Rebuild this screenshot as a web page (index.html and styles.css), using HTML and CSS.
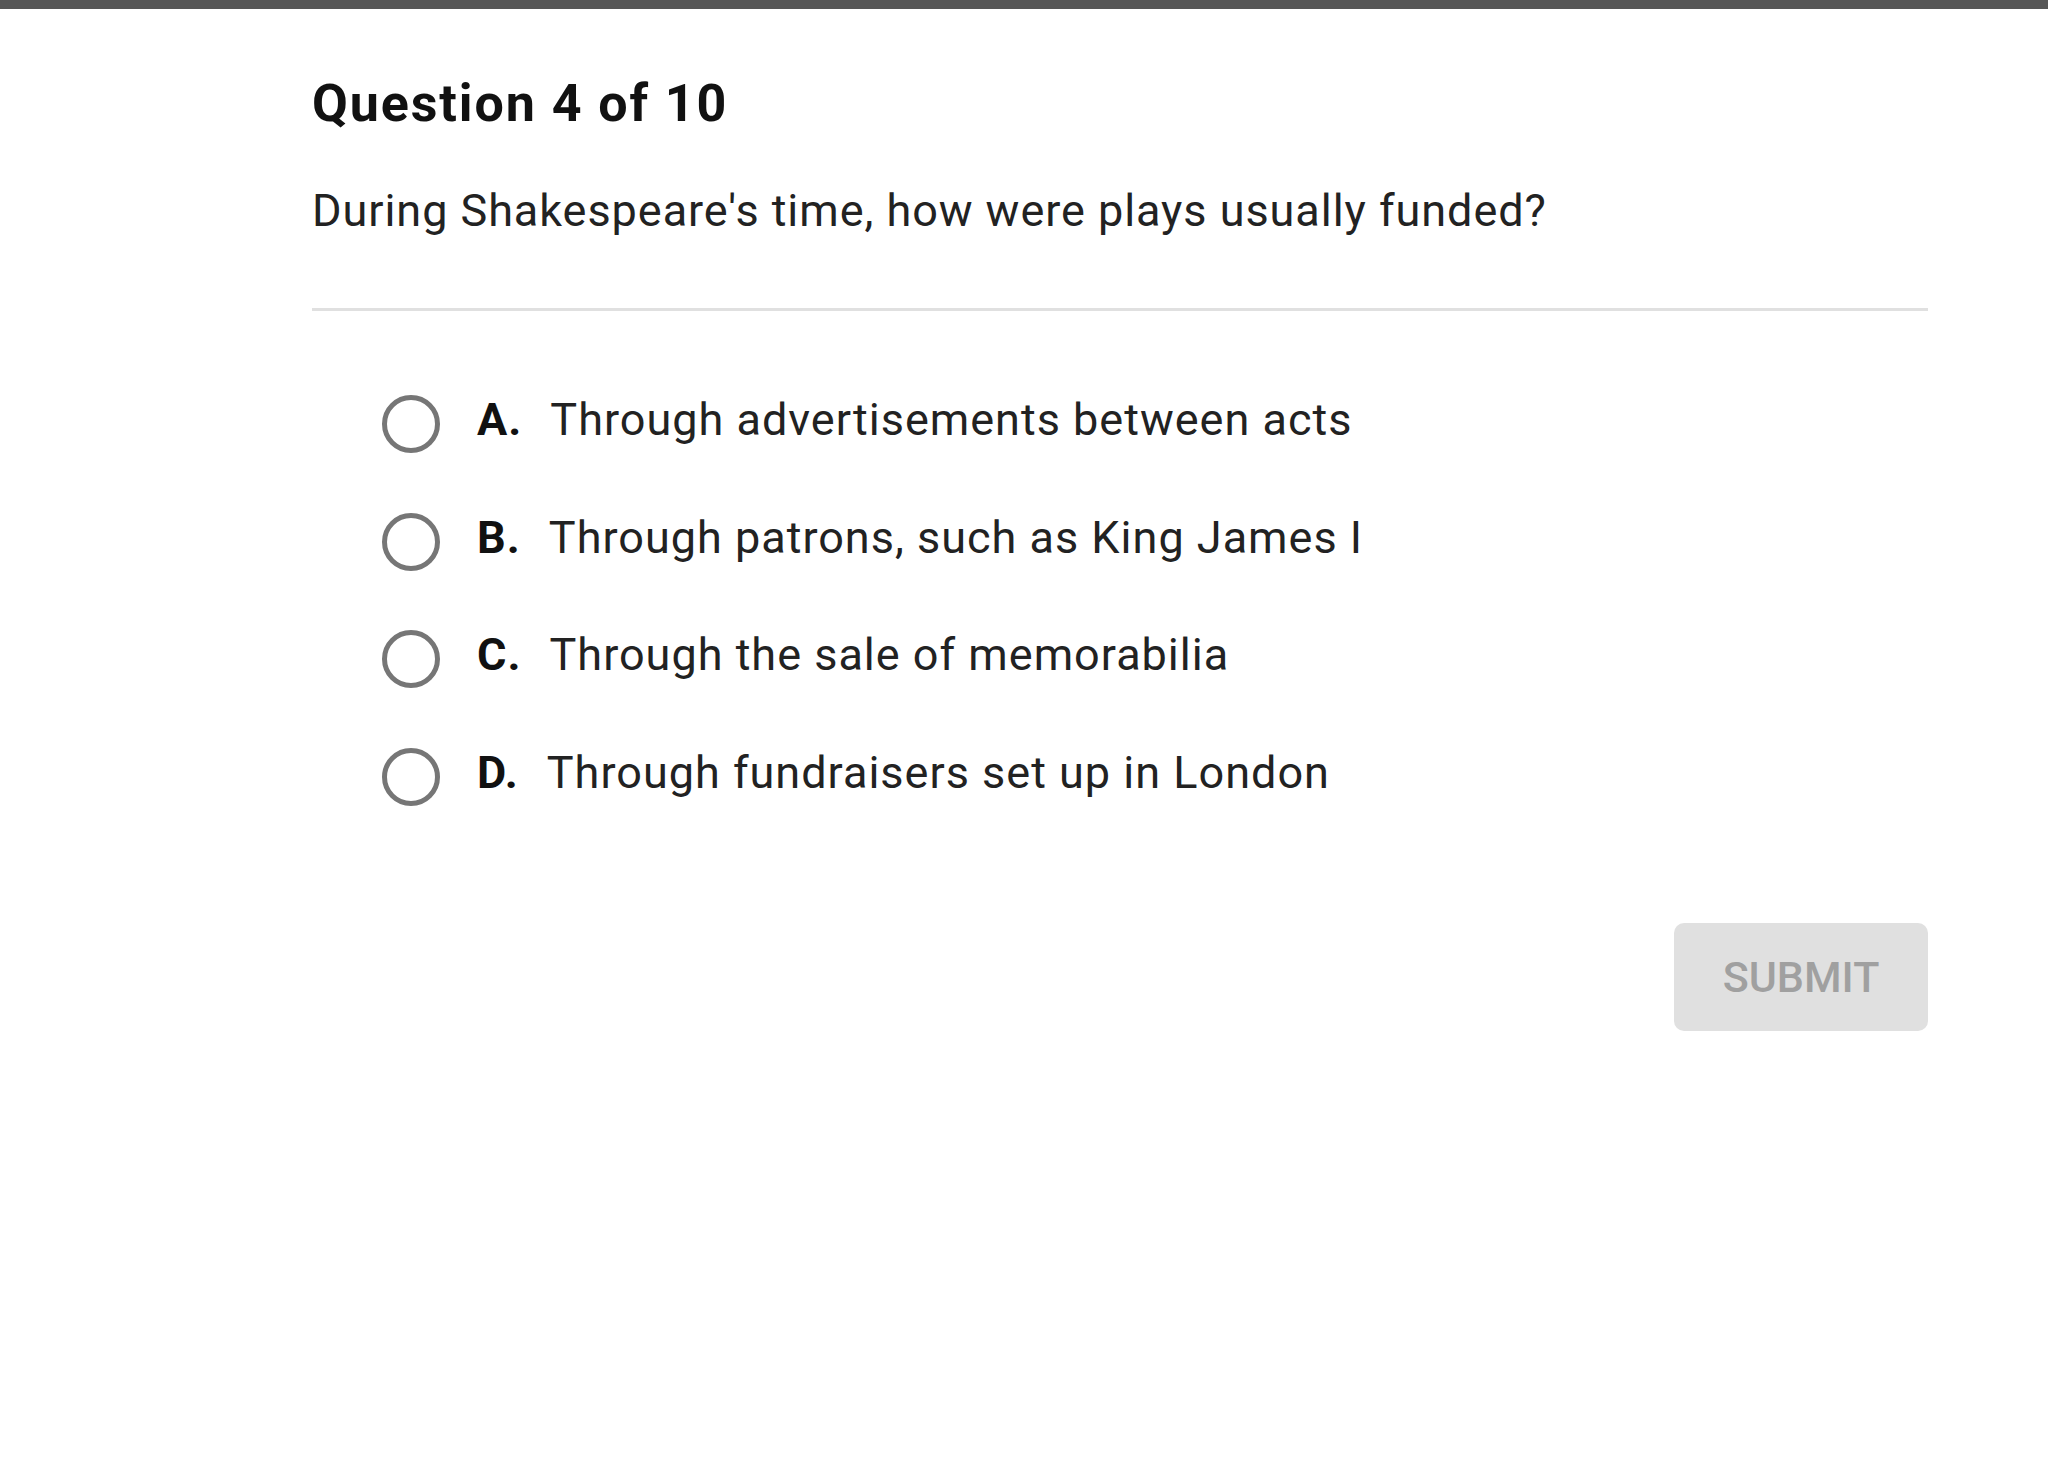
FILE: index.html
```html
<!DOCTYPE html>
<html lang="en">
<head>
<meta charset="utf-8">
<title>Question 4 of 10</title>
<link rel="stylesheet" href="styles.css">
</head>
<body>
<div class="topbar"></div>
<main class="quiz">
  <h1 class="quiz-title">Question 4 of 10</h1>
  <p class="quiz-question">During Shakespeare's time, how were plays usually funded?</p>
  <hr class="divider">
  <ul class="options">
    <li class="option"><span class="radio"></span><span class="opt-label">A.</span><span class="opt-text">Through advertisements between acts</span></li>
    <li class="option"><span class="radio"></span><span class="opt-label">B.</span><span class="opt-text">Through patrons, such as King James I</span></li>
    <li class="option"><span class="radio"></span><span class="opt-label">C.</span><span class="opt-text">Through the sale of memorabilia</span></li>
    <li class="option"><span class="radio"></span><span class="opt-label">D.</span><span class="opt-text">Through fundraisers set up in London</span></li>
  </ul>
  <div class="actions">
    <button class="submit" disabled>SUBMIT</button>
  </div>
</main>
</body>
</html>
```
FILE: styles.css
```css
html, body {
  margin: 0;
  padding: 0;
  background: #ffffff;
}
body {
  font-family: Roboto, "Liberation Sans", sans-serif;
  color: #222222;
}
.topbar {
  height: 9px;
  background: #575757;
}
.quiz {
  width: 1616px;
  margin-left: 312px;
  padding-top: 65px;
}
.quiz-title {
  margin: 0;
  font-size: 52px;
  line-height: 60px;
  font-weight: 700;
  letter-spacing: 1.9px;
  color: #111111;
}
.quiz-question {
  margin: 50px 0 0 0;
  font-size: 45px;
  line-height: 54px;
  font-weight: 400;
  letter-spacing: 0.95px;
  color: #222222;
}
.divider {
  margin: 70px 0 0 0;
  border: 0;
  height: 3px;
  background: #e0e0e0;
}
.options {
  list-style: none;
  margin: 84px 0 0 0;
  padding: 0 0 0 70px;
  display: flex;
  flex-direction: column;
  gap: 59.5px;
}
.option {
  display: flex;
  align-items: center;
  height: 58px;
  font-size: 45px;
  line-height: 52px;
  letter-spacing: 1px;
}
.radio {
  box-sizing: border-box;
  width: 58px;
  height: 58px;
  border: 5px solid #767676;
  border-radius: 50%;
  flex: none;
  margin-right: 37px;
}
.opt-label {
  font-weight: 700;
  color: #111111;
  margin-right: 28px;
  position: relative;
  top: -4px;
}
.opt-text {
  color: #222222;
  position: relative;
  top: -4px;
}
.actions {
  display: flex;
  justify-content: flex-end;
  margin-top: 117px;
}
.submit {
  width: 254px;
  height: 108px;
  border: 0;
  border-radius: 10px;
  background: #e0e0e0;
  color: #a0a0a0;
  font-family: Roboto, "Liberation Sans", sans-serif;
  font-size: 43px;
  font-weight: 500;
  padding: 0;
}
```
